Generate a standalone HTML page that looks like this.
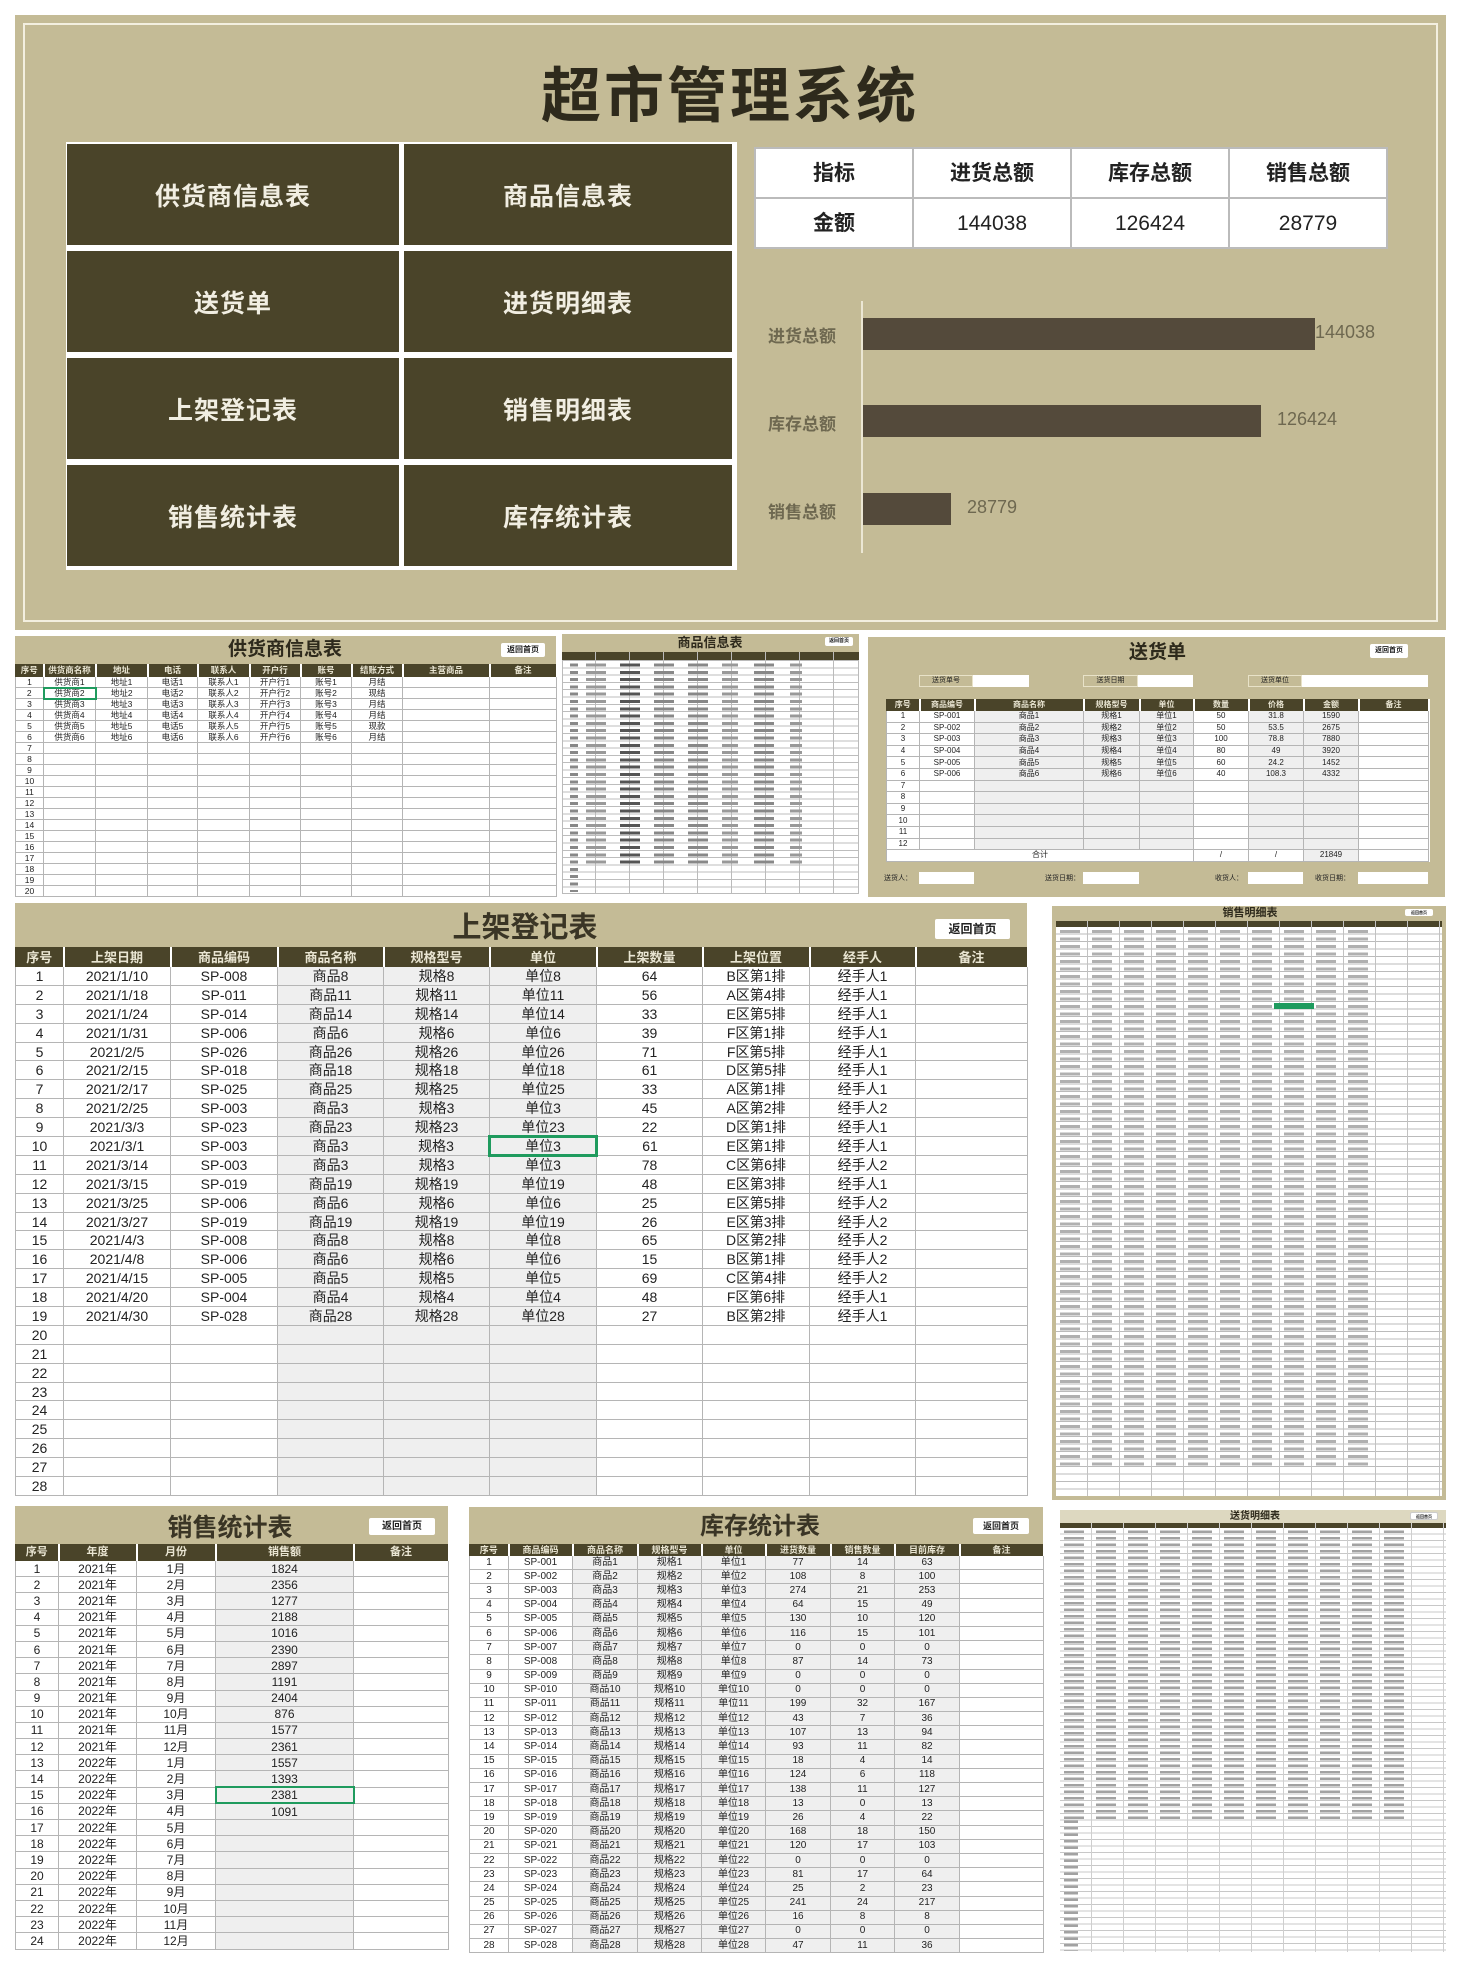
<!DOCTYPE html>
<html><head><meta charset="utf-8">
<style>
*{box-sizing:border-box;margin:0;padding:0}
body{width:1458px;height:1964px;background:#fff;position:relative;overflow:hidden;font-family:"Liberation Sans","Noto Sans CJK SC",sans-serif;color:#222}
.a{position:absolute}
.k{background:#c4bb96}
table{border-collapse:collapse;table-layout:fixed;position:absolute;background:#fff}
td,th{border:1px solid #b5b5b5;text-align:center;white-space:nowrap;overflow:hidden;padding:0;font-weight:normal;line-height:1}
th{background:#4a4429;color:#e9e5d2;border-color:#4a4429;border-right:2px solid #fff;font-weight:bold}
.g{background:#efefef}
.btn{background:#fff;border-radius:2px;text-align:center;color:#222;font-weight:bold}
.nav{position:absolute;background:#4a4429;color:#f1eee2;font-weight:bold;font-size:25px;display:flex;align-items:center;justify-content:center;letter-spacing:1px}
.t{position:absolute;text-align:center;font-weight:bold;color:#2e2a1c}
</style></head><body>

<!-- Dashboard -->
<div class="a k" style="left:15px;top:15px;width:1431px;height:615px"></div>
<div class="a" style="left:23px;top:23px;width:1415px;height:599px;border:2px solid #f3efe0"></div>
<div class="t" style="left:430px;top:62px;width:600px;font-size:60px;line-height:70px;letter-spacing:3px">超市管理系统</div>
<div class="a" style="left:66px;top:142px;width:671px;height:428px;background:#fff"></div>
<div class="nav" style="left:67px;top:144px;width:332px;height:101px">供货商信息表</div>
<div class="nav" style="left:404px;top:144px;width:328px;height:101px">商品信息表</div>
<div class="nav" style="left:67px;top:251px;width:332px;height:101px">送货单</div>
<div class="nav" style="left:404px;top:251px;width:328px;height:101px">进货明细表</div>
<div class="nav" style="left:67px;top:358px;width:332px;height:101px">上架登记表</div>
<div class="nav" style="left:404px;top:358px;width:328px;height:101px">销售明细表</div>
<div class="nav" style="left:67px;top:465px;width:332px;height:101px">销售统计表</div>
<div class="nav" style="left:404px;top:465px;width:328px;height:101px">库存统计表</div>

<table style="left:754px;top:147px;width:634px;height:102px;border:2px solid #bbb;font-size:21px;font-weight:bold">
<tr style="height:50px"><td style="border:2px solid #bbb;font-weight:bold">指标</td><td style="border:2px solid #bbb;font-weight:bold">进货总额</td><td style="border:2px solid #bbb;font-weight:bold">库存总额</td><td style="border:2px solid #bbb;font-weight:bold">销售总额</td></tr>
<tr style="height:50px"><td style="border:2px solid #bbb;font-weight:bold">金额</td><td style="border:2px solid #bbb">144038</td><td style="border:2px solid #bbb">126424</td><td style="border:2px solid #bbb">28779</td></tr>
</table>

<div class="a" style="left:861px;top:301px;width:2px;height:252px;background:#ece7d4"></div>
<div class="a" style="left:863px;top:318px;width:452px;height:32px;background:#544a3b"></div>
<div class="a" style="left:863px;top:405px;width:398px;height:32px;background:#544a3b"></div>
<div class="a" style="left:863px;top:493px;width:88px;height:32px;background:#544a3b"></div>
<div class="a" style="left:768px;top:322px;font-size:17px;color:#6e6850;font-weight:bold">进货总额</div>
<div class="a" style="left:768px;top:410px;font-size:17px;color:#6e6850;font-weight:bold">库存总额</div>
<div class="a" style="left:768px;top:498px;font-size:17px;color:#6e6850;font-weight:bold">销售总额</div>
<div class="a" style="left:1315px;top:322px;font-size:18px;color:#6e6850">144038</div>
<div class="a" style="left:1277px;top:409px;font-size:18px;color:#6e6850">126424</div>
<div class="a" style="left:967px;top:497px;font-size:18px;color:#6e6850">28779</div>

<!-- 供货商信息表 -->
<div class="a k" style="left:15px;top:636px;width:541px;height:28px"></div>
<div class="t" style="left:180px;top:638px;width:210px;font-size:19px;line-height:24px">供货商信息表</div>
<div class="a btn" style="left:501px;top:643px;width:44px;height:14px;font-size:8px;line-height:14px">返回首页</div>
<table style="left:15px;top:664px;width:541px;font-size:8.5px">
<colgroup><col style="width:28px"><col style="width:52px"><col style="width:52px"><col style="width:50px"><col style="width:52px"><col style="width:51px"><col style="width:51px"><col style="width:51px"><col style="width:87px"><col style="width:67px"></colgroup>
<tr style="height:12px"><th>序号</th><th>供货商名称</th><th>地址</th><th>电话</th><th>联系人</th><th>开户行</th><th>账号</th><th>结账方式</th><th>主营商品</th><th>备注</th></tr>
<tr style="height:11px"><td>1</td><td>供货商1</td><td>地址1</td><td>电话1</td><td>联系人1</td><td>开户行1</td><td>账号1</td><td>月结</td><td></td><td></td></tr>
<tr style="height:11px"><td>2</td><td style="border:2px solid #1f9b5e">供货商2</td><td>地址2</td><td>电话2</td><td>联系人2</td><td>开户行2</td><td>账号2</td><td>现结</td><td></td><td></td></tr>
<tr style="height:11px"><td>3</td><td>供货商3</td><td>地址3</td><td>电话3</td><td>联系人3</td><td>开户行3</td><td>账号3</td><td>月结</td><td></td><td></td></tr>
<tr style="height:11px"><td>4</td><td>供货商4</td><td>地址4</td><td>电话4</td><td>联系人4</td><td>开户行4</td><td>账号4</td><td>月结</td><td></td><td></td></tr>
<tr style="height:11px"><td>5</td><td>供货商5</td><td>地址5</td><td>电话5</td><td>联系人5</td><td>开户行5</td><td>账号5</td><td>现款</td><td></td><td></td></tr>
<tr style="height:11px"><td>6</td><td>供货商6</td><td>地址6</td><td>电话6</td><td>联系人6</td><td>开户行6</td><td>账号6</td><td>月结</td><td></td><td></td></tr>
<tr style="height:11px"><td>7</td><td></td><td></td><td></td><td></td><td></td><td></td><td></td><td></td><td></td></tr>
<tr style="height:11px"><td>8</td><td></td><td></td><td></td><td></td><td></td><td></td><td></td><td></td><td></td></tr>
<tr style="height:11px"><td>9</td><td></td><td></td><td></td><td></td><td></td><td></td><td></td><td></td><td></td></tr>
<tr style="height:11px"><td>10</td><td></td><td></td><td></td><td></td><td></td><td></td><td></td><td></td><td></td></tr>
<tr style="height:11px"><td>11</td><td></td><td></td><td></td><td></td><td></td><td></td><td></td><td></td><td></td></tr>
<tr style="height:11px"><td>12</td><td></td><td></td><td></td><td></td><td></td><td></td><td></td><td></td><td></td></tr>
<tr style="height:11px"><td>13</td><td></td><td></td><td></td><td></td><td></td><td></td><td></td><td></td><td></td></tr>
<tr style="height:11px"><td>14</td><td></td><td></td><td></td><td></td><td></td><td></td><td></td><td></td><td></td></tr>
<tr style="height:11px"><td>15</td><td></td><td></td><td></td><td></td><td></td><td></td><td></td><td></td><td></td></tr>
<tr style="height:11px"><td>16</td><td></td><td></td><td></td><td></td><td></td><td></td><td></td><td></td><td></td></tr>
<tr style="height:11px"><td>17</td><td></td><td></td><td></td><td></td><td></td><td></td><td></td><td></td><td></td></tr>
<tr style="height:11px"><td>18</td><td></td><td></td><td></td><td></td><td></td><td></td><td></td><td></td><td></td></tr>
<tr style="height:11px"><td>19</td><td></td><td></td><td></td><td></td><td></td><td></td><td></td><td></td><td></td></tr>
<tr style="height:11px"><td>20</td><td></td><td></td><td></td><td></td><td></td><td></td><td></td><td></td><td></td></tr>
</table>

<!-- 商品信息表 thumbnail -->
<div class="a k" style="left:562px;top:634px;width:297px;height:18px"></div>
<div class="t" style="left:650px;top:634px;width:120px;font-size:13px;line-height:18px">商品信息表</div>
<div class="a btn" style="left:825px;top:637px;width:28px;height:9px;font-size:5px;line-height:9px">返回首页</div>
<div class="a" style="left:562px;top:652px;width:297px;height:8px;background:#4a4429"></div>
<div class="a" style="left:562px;top:660px;width:297px;height:234px;background:repeating-linear-gradient(to bottom,transparent 0 6.3px,#bdbdbd 6.3px 7.3px),#fff;border:1px solid #bbb"></div>
<div class="a" style="left:562px;top:652px;width:297px;height:242px;background:repeating-linear-gradient(to right,transparent 0 33px,#bbb 33px 34px)"></div>
<div class="a" style="left:570px;top:662px;width:8px;height:230px;background:repeating-linear-gradient(to bottom,transparent 0 1.5px,#888 1.5px 4.5px,transparent 4.5px 7.3px)"></div>
<div class="a" style="left:586px;top:662px;width:20px;height:204px;background:repeating-linear-gradient(to bottom,transparent 0 1.5px,#999 1.5px 4.5px,transparent 4.5px 7.3px)"></div>
<div class="a" style="left:620px;top:662px;width:20px;height:204px;background:repeating-linear-gradient(to bottom,transparent 0 1.5px,#555 1.5px 4.5px,transparent 4.5px 7.3px)"></div>
<div class="a" style="left:654px;top:662px;width:20px;height:204px;background:repeating-linear-gradient(to bottom,transparent 0 1.5px,#888 1.5px 4.5px,transparent 4.5px 7.3px)"></div>
<div class="a" style="left:688px;top:662px;width:20px;height:204px;background:repeating-linear-gradient(to bottom,transparent 0 1.5px,#888 1.5px 4.5px,transparent 4.5px 7.3px)"></div>
<div class="a" style="left:722px;top:662px;width:16px;height:204px;background:repeating-linear-gradient(to bottom,transparent 0 1.5px,#999 1.5px 4.5px,transparent 4.5px 7.3px)"></div>
<div class="a" style="left:754px;top:662px;width:20px;height:204px;background:repeating-linear-gradient(to bottom,transparent 0 1.5px,#888 1.5px 4.5px,transparent 4.5px 7.3px)"></div>
<div class="a" style="left:790px;top:662px;width:12px;height:204px;background:repeating-linear-gradient(to bottom,transparent 0 1.5px,#999 1.5px 4.5px,transparent 4.5px 7.3px)"></div>

<!-- 送货单 -->
<div class="a k" style="left:868px;top:637px;width:577px;height:260px"></div>
<div class="t" style="left:1100px;top:641px;width:115px;font-size:19px;line-height:24px">送货单</div>
<div class="a btn" style="left:1370px;top:644px;width:38px;height:14px;font-size:7px;line-height:14px">返回首页</div>
<div class="a" style="left:919px;top:675px;width:54px;height:12px;border:1px solid #e8e2c8;font-size:7px;text-align:center;line-height:10px">送货单号</div>
<div class="a" style="left:973px;top:675px;width:56px;height:12px;background:#fff"></div>
<div class="a" style="left:1083px;top:675px;width:55px;height:12px;border:1px solid #e8e2c8;font-size:7px;text-align:center;line-height:10px">送货日期</div>
<div class="a" style="left:1138px;top:675px;width:55px;height:12px;background:#fff"></div>
<div class="a" style="left:1248px;top:675px;width:54px;height:12px;border:1px solid #e8e2c8;font-size:7px;text-align:center;line-height:10px">送货单位</div>
<div class="a" style="left:1302px;top:675px;width:126px;height:12px;background:#fff"></div>
<table style="left:886px;top:699px;width:542px;font-size:8px">
<colgroup><col style="width:33px"><col style="width:55px"><col style="width:109px"><col style="width:56px"><col style="width:54px"><col style="width:55px"><col style="width:55px"><col style="width:55px"><col style="width:70px"></colgroup>
<tr style="height:11px"><th>序号</th><th>商品编号</th><th>商品名称</th><th>规格型号</th><th>单位</th><th>数量</th><th>价格</th><th>金额</th><th>备注</th></tr>
<tr style="height:11.6px"><td>1</td><td>SP-001</td><td class="g">商品1</td><td class="g">规格1</td><td class="g">单位1</td><td>50</td><td class="g">31.8</td><td class="g">1590</td><td></td></tr>
<tr style="height:11.6px"><td>2</td><td>SP-002</td><td class="g">商品2</td><td class="g">规格2</td><td class="g">单位2</td><td>50</td><td class="g">53.5</td><td class="g">2675</td><td></td></tr>
<tr style="height:11.6px"><td>3</td><td>SP-003</td><td class="g">商品3</td><td class="g">规格3</td><td class="g">单位3</td><td>100</td><td class="g">78.8</td><td class="g">7880</td><td></td></tr>
<tr style="height:11.6px"><td>4</td><td>SP-004</td><td class="g">商品4</td><td class="g">规格4</td><td class="g">单位4</td><td>80</td><td class="g">49</td><td class="g">3920</td><td></td></tr>
<tr style="height:11.6px"><td>5</td><td>SP-005</td><td class="g">商品5</td><td class="g">规格5</td><td class="g">单位5</td><td>60</td><td class="g">24.2</td><td class="g">1452</td><td></td></tr>
<tr style="height:11.6px"><td>6</td><td>SP-006</td><td class="g">商品6</td><td class="g">规格6</td><td class="g">单位6</td><td>40</td><td class="g">108.3</td><td class="g">4332</td><td></td></tr>
<tr style="height:11.6px"><td>7</td><td></td><td class="g"></td><td class="g"></td><td class="g"></td><td></td><td class="g"></td><td class="g"></td><td></td></tr>
<tr style="height:11.6px"><td>8</td><td></td><td class="g"></td><td class="g"></td><td class="g"></td><td></td><td class="g"></td><td class="g"></td><td></td></tr>
<tr style="height:11.6px"><td>9</td><td></td><td class="g"></td><td class="g"></td><td class="g"></td><td></td><td class="g"></td><td class="g"></td><td></td></tr>
<tr style="height:11.6px"><td>10</td><td></td><td class="g"></td><td class="g"></td><td class="g"></td><td></td><td class="g"></td><td class="g"></td><td></td></tr>
<tr style="height:11.6px"><td>11</td><td></td><td class="g"></td><td class="g"></td><td class="g"></td><td></td><td class="g"></td><td class="g"></td><td></td></tr>
<tr style="height:11.6px"><td>12</td><td></td><td class="g"></td><td class="g"></td><td class="g"></td><td></td><td class="g"></td><td class="g"></td><td></td></tr>
<tr style="height:11.6px"><td colspan="5">合计</td><td>/</td><td>/</td><td class="g">21849</td><td></td></tr>
</table>
<div class="a" style="left:884px;top:873px;font-size:7px">送货人：</div>
<div class="a" style="left:919px;top:872px;width:55px;height:12px;background:#fff"></div>
<div class="a" style="left:1045px;top:873px;font-size:7px">送货日期：</div>
<div class="a" style="left:1083px;top:872px;width:56px;height:12px;background:#fff"></div>
<div class="a" style="left:1215px;top:873px;font-size:7px">收货人：</div>
<div class="a" style="left:1248px;top:872px;width:55px;height:12px;background:#fff"></div>
<div class="a" style="left:1315px;top:873px;font-size:7px">收货日期：</div>
<div class="a" style="left:1358px;top:872px;width:70px;height:12px;background:#fff"></div>

<!-- 上架登记表 -->
<div class="a k" style="left:15px;top:903px;width:1012px;height:44px"></div>
<div class="t" style="left:400px;top:910px;width:250px;font-size:29px;line-height:36px;color:#3a3525">上架登记表</div>
<div class="a btn" style="left:935px;top:919px;width:75px;height:20px;font-size:12px;line-height:20px">返回首页</div>
<table style="left:15px;top:947px;width:1012px;font-size:14px">
<colgroup><col style="width:48px"><col style="width:107px"><col style="width:107px"><col style="width:106px"><col style="width:106px"><col style="width:107px"><col style="width:106px"><col style="width:107px"><col style="width:106px"><col style="width:112px"></colgroup>
<tr style="height:19px"><th style="font-size:13px">序号</th><th style="font-size:13px">上架日期</th><th style="font-size:13px">商品编码</th><th style="font-size:13px">商品名称</th><th style="font-size:13px">规格型号</th><th style="font-size:13px">单位</th><th style="font-size:13px">上架数量</th><th style="font-size:13px">上架位置</th><th style="font-size:13px">经手人</th><th style="font-size:13px">备注</th></tr>
<tr style="height:18.9px"><td>1</td><td>2021/1/10</td><td>SP-008</td><td class="g">商品8</td><td class="g">规格8</td><td class="g">单位8</td><td>64</td><td>B区第1排</td><td>经手人1</td><td></td></tr>
<tr style="height:18.9px"><td>2</td><td>2021/1/18</td><td>SP-011</td><td class="g">商品11</td><td class="g">规格11</td><td class="g">单位11</td><td>56</td><td>A区第4排</td><td>经手人1</td><td></td></tr>
<tr style="height:18.9px"><td>3</td><td>2021/1/24</td><td>SP-014</td><td class="g">商品14</td><td class="g">规格14</td><td class="g">单位14</td><td>33</td><td>E区第5排</td><td>经手人1</td><td></td></tr>
<tr style="height:18.9px"><td>4</td><td>2021/1/31</td><td>SP-006</td><td class="g">商品6</td><td class="g">规格6</td><td class="g">单位6</td><td>39</td><td>F区第1排</td><td>经手人1</td><td></td></tr>
<tr style="height:18.9px"><td>5</td><td>2021/2/5</td><td>SP-026</td><td class="g">商品26</td><td class="g">规格26</td><td class="g">单位26</td><td>71</td><td>F区第5排</td><td>经手人1</td><td></td></tr>
<tr style="height:18.9px"><td>6</td><td>2021/2/15</td><td>SP-018</td><td class="g">商品18</td><td class="g">规格18</td><td class="g">单位18</td><td>61</td><td>D区第5排</td><td>经手人1</td><td></td></tr>
<tr style="height:18.9px"><td>7</td><td>2021/2/17</td><td>SP-025</td><td class="g">商品25</td><td class="g">规格25</td><td class="g">单位25</td><td>33</td><td>A区第1排</td><td>经手人1</td><td></td></tr>
<tr style="height:18.9px"><td>8</td><td>2021/2/25</td><td>SP-003</td><td class="g">商品3</td><td class="g">规格3</td><td class="g">单位3</td><td>45</td><td>A区第2排</td><td>经手人2</td><td></td></tr>
<tr style="height:18.9px"><td>9</td><td>2021/3/3</td><td>SP-023</td><td class="g">商品23</td><td class="g">规格23</td><td class="g">单位23</td><td>22</td><td>D区第1排</td><td>经手人1</td><td></td></tr>
<tr style="height:18.9px"><td>10</td><td>2021/3/1</td><td>SP-003</td><td class="g">商品3</td><td class="g">规格3</td><td class="g" style="border:3px solid #1f9b5e">单位3</td><td>61</td><td>E区第1排</td><td>经手人1</td><td></td></tr>
<tr style="height:18.9px"><td>11</td><td>2021/3/14</td><td>SP-003</td><td class="g">商品3</td><td class="g">规格3</td><td class="g">单位3</td><td>78</td><td>C区第6排</td><td>经手人2</td><td></td></tr>
<tr style="height:18.9px"><td>12</td><td>2021/3/15</td><td>SP-019</td><td class="g">商品19</td><td class="g">规格19</td><td class="g">单位19</td><td>48</td><td>E区第3排</td><td>经手人1</td><td></td></tr>
<tr style="height:18.9px"><td>13</td><td>2021/3/25</td><td>SP-006</td><td class="g">商品6</td><td class="g">规格6</td><td class="g">单位6</td><td>25</td><td>E区第5排</td><td>经手人2</td><td></td></tr>
<tr style="height:18.9px"><td>14</td><td>2021/3/27</td><td>SP-019</td><td class="g">商品19</td><td class="g">规格19</td><td class="g">单位19</td><td>26</td><td>E区第3排</td><td>经手人2</td><td></td></tr>
<tr style="height:18.9px"><td>15</td><td>2021/4/3</td><td>SP-008</td><td class="g">商品8</td><td class="g">规格8</td><td class="g">单位8</td><td>65</td><td>D区第2排</td><td>经手人2</td><td></td></tr>
<tr style="height:18.9px"><td>16</td><td>2021/4/8</td><td>SP-006</td><td class="g">商品6</td><td class="g">规格6</td><td class="g">单位6</td><td>15</td><td>B区第1排</td><td>经手人2</td><td></td></tr>
<tr style="height:18.9px"><td>17</td><td>2021/4/15</td><td>SP-005</td><td class="g">商品5</td><td class="g">规格5</td><td class="g">单位5</td><td>69</td><td>C区第4排</td><td>经手人2</td><td></td></tr>
<tr style="height:18.9px"><td>18</td><td>2021/4/20</td><td>SP-004</td><td class="g">商品4</td><td class="g">规格4</td><td class="g">单位4</td><td>48</td><td>F区第6排</td><td>经手人1</td><td></td></tr>
<tr style="height:18.9px"><td>19</td><td>2021/4/30</td><td>SP-028</td><td class="g">商品28</td><td class="g">规格28</td><td class="g">单位28</td><td>27</td><td>B区第2排</td><td>经手人1</td><td></td></tr>
<tr style="height:18.9px"><td>20</td><td></td><td></td><td class="g"></td><td class="g"></td><td class="g"></td><td></td><td></td><td></td><td></td></tr>
<tr style="height:18.9px"><td>21</td><td></td><td></td><td class="g"></td><td class="g"></td><td class="g"></td><td></td><td></td><td></td><td></td></tr>
<tr style="height:18.9px"><td>22</td><td></td><td></td><td class="g"></td><td class="g"></td><td class="g"></td><td></td><td></td><td></td><td></td></tr>
<tr style="height:18.9px"><td>23</td><td></td><td></td><td class="g"></td><td class="g"></td><td class="g"></td><td></td><td></td><td></td><td></td></tr>
<tr style="height:18.9px"><td>24</td><td></td><td></td><td class="g"></td><td class="g"></td><td class="g"></td><td></td><td></td><td></td><td></td></tr>
<tr style="height:18.9px"><td>25</td><td></td><td></td><td class="g"></td><td class="g"></td><td class="g"></td><td></td><td></td><td></td><td></td></tr>
<tr style="height:18.9px"><td>26</td><td></td><td></td><td class="g"></td><td class="g"></td><td class="g"></td><td></td><td></td><td></td><td></td></tr>
<tr style="height:18.9px"><td>27</td><td></td><td></td><td class="g"></td><td class="g"></td><td class="g"></td><td></td><td></td><td></td><td></td></tr>
<tr style="height:18.9px"><td>28</td><td></td><td></td><td class="g"></td><td class="g"></td><td class="g"></td><td></td><td></td><td></td><td></td></tr>
</table>

<!-- 销售明细表 thumbnail -->
<div class="a k" style="left:1052px;top:906px;width:394px;height:594px"></div>
<div class="t" style="left:1180px;top:907px;width:140px;font-size:11px;line-height:13px">销售明细表</div>
<div class="a btn" style="left:1405px;top:909px;width:28px;height:7px;font-size:4px;line-height:7px">返回首页</div>
<div class="a" style="left:1056px;top:921px;width:386px;height:6px;background:#4a4429"></div>
<div class="a" style="left:1056px;top:927px;width:386px;height:569px;background:repeating-linear-gradient(to bottom,transparent 0 6.5px,#bbb 6.5px 7.5px),#fff"></div>
<div class="a" style="left:1056px;top:921px;width:386px;height:575px;background:repeating-linear-gradient(to right,transparent 0 31px,#c2c2c2 31px 32px)"></div>
<div class="a" style="left:1060px;top:928px;width:320px;height:540px;background:repeating-linear-gradient(to bottom,transparent 0 2px,rgba(80,80,80,.45) 2px 5px,transparent 5px 7.5px);-webkit-mask:repeating-linear-gradient(to right,#000 0 20px,transparent 20px 32px)"></div>
<div class="a" style="left:1274px;top:1003px;width:40px;height:6px;background:#1f9b5e"></div>

<!-- 销售统计表 -->
<div class="a k" style="left:15px;top:1506px;width:433px;height:38px"></div>
<div class="t" style="left:150px;top:1512px;width:160px;font-size:25px;line-height:32px;color:#3a3525">销售统计表</div>
<div class="a btn" style="left:369px;top:1518px;width:66px;height:17px;font-size:10px;line-height:17px">返回首页</div>
<table style="left:15px;top:1544px;width:433px;font-size:12px">
<colgroup><col style="width:43px"><col style="width:78px"><col style="width:79px"><col style="width:138px"><col style="width:95px"></colgroup>
<tr style="height:16px"><th style="font-size:11px">序号</th><th style="font-size:11px">年度</th><th style="font-size:11px">月份</th><th style="font-size:11px">销售额</th><th style="font-size:11px">备注</th></tr>
<tr style="height:16.2px"><td>1</td><td>2021年</td><td>1月</td><td class="g">1824</td><td></td></tr>
<tr style="height:16.2px"><td>2</td><td>2021年</td><td>2月</td><td class="g">2356</td><td></td></tr>
<tr style="height:16.2px"><td>3</td><td>2021年</td><td>3月</td><td class="g">1277</td><td></td></tr>
<tr style="height:16.2px"><td>4</td><td>2021年</td><td>4月</td><td class="g">2188</td><td></td></tr>
<tr style="height:16.2px"><td>5</td><td>2021年</td><td>5月</td><td class="g">1016</td><td></td></tr>
<tr style="height:16.2px"><td>6</td><td>2021年</td><td>6月</td><td class="g">2390</td><td></td></tr>
<tr style="height:16.2px"><td>7</td><td>2021年</td><td>7月</td><td class="g">2897</td><td></td></tr>
<tr style="height:16.2px"><td>8</td><td>2021年</td><td>8月</td><td class="g">1191</td><td></td></tr>
<tr style="height:16.2px"><td>9</td><td>2021年</td><td>9月</td><td class="g">2404</td><td></td></tr>
<tr style="height:16.2px"><td>10</td><td>2021年</td><td>10月</td><td class="g">876</td><td></td></tr>
<tr style="height:16.2px"><td>11</td><td>2021年</td><td>11月</td><td class="g">1577</td><td></td></tr>
<tr style="height:16.2px"><td>12</td><td>2021年</td><td>12月</td><td class="g">2361</td><td></td></tr>
<tr style="height:16.2px"><td>13</td><td>2022年</td><td>1月</td><td class="g">1557</td><td></td></tr>
<tr style="height:16.2px"><td>14</td><td>2022年</td><td>2月</td><td class="g">1393</td><td></td></tr>
<tr style="height:16.2px"><td>15</td><td>2022年</td><td>3月</td><td class="g" style="border:2px solid #1f9b5e">2381</td><td></td></tr>
<tr style="height:16.2px"><td>16</td><td>2022年</td><td>4月</td><td class="g">1091</td><td></td></tr>
<tr style="height:16.2px"><td>17</td><td>2022年</td><td>5月</td><td class="g"></td><td></td></tr>
<tr style="height:16.2px"><td>18</td><td>2022年</td><td>6月</td><td class="g"></td><td></td></tr>
<tr style="height:16.2px"><td>19</td><td>2022年</td><td>7月</td><td class="g"></td><td></td></tr>
<tr style="height:16.2px"><td>20</td><td>2022年</td><td>8月</td><td class="g"></td><td></td></tr>
<tr style="height:16.2px"><td>21</td><td>2022年</td><td>9月</td><td class="g"></td><td></td></tr>
<tr style="height:16.2px"><td>22</td><td>2022年</td><td>10月</td><td class="g"></td><td></td></tr>
<tr style="height:16.2px"><td>23</td><td>2022年</td><td>11月</td><td class="g"></td><td></td></tr>
<tr style="height:16.2px"><td>24</td><td>2022年</td><td>12月</td><td class="g"></td><td></td></tr>
</table>

<!-- 库存统计表 -->
<div class="a k" style="left:469px;top:1507px;width:574px;height:37px"></div>
<div class="t" style="left:680px;top:1512px;width:160px;font-size:24px;line-height:30px;color:#3a3525">库存统计表</div>
<div class="a btn" style="left:973px;top:1518px;width:56px;height:16px;font-size:9px;line-height:16px">返回首页</div>
<table style="left:469px;top:1544px;width:574px;font-size:10px">
<colgroup><col style="width:39px"><col style="width:64px"><col style="width:65px"><col style="width:64px"><col style="width:64px"><col style="width:65px"><col style="width:64px"><col style="width:65px"><col style="width:84px"></colgroup>
<tr style="height:11px"><th style="font-size:9px">序号</th><th style="font-size:9px">商品编码</th><th style="font-size:9px">商品名称</th><th style="font-size:9px">规格型号</th><th style="font-size:9px">单位</th><th style="font-size:9px">进货数量</th><th style="font-size:9px">销售数量</th><th style="font-size:9px">目前库存</th><th style="font-size:9px">备注</th></tr>
<tr style="height:14.2px"><td>1</td><td>SP-001</td><td class="g">商品1</td><td class="g">规格1</td><td class="g">单位1</td><td class="g">77</td><td class="g">14</td><td class="g">63</td><td></td></tr>
<tr style="height:14.2px"><td>2</td><td>SP-002</td><td class="g">商品2</td><td class="g">规格2</td><td class="g">单位2</td><td class="g">108</td><td class="g">8</td><td class="g">100</td><td></td></tr>
<tr style="height:14.2px"><td>3</td><td>SP-003</td><td class="g">商品3</td><td class="g">规格3</td><td class="g">单位3</td><td class="g">274</td><td class="g">21</td><td class="g">253</td><td></td></tr>
<tr style="height:14.2px"><td>4</td><td>SP-004</td><td class="g">商品4</td><td class="g">规格4</td><td class="g">单位4</td><td class="g">64</td><td class="g">15</td><td class="g">49</td><td></td></tr>
<tr style="height:14.2px"><td>5</td><td>SP-005</td><td class="g">商品5</td><td class="g">规格5</td><td class="g">单位5</td><td class="g">130</td><td class="g">10</td><td class="g">120</td><td></td></tr>
<tr style="height:14.2px"><td>6</td><td>SP-006</td><td class="g">商品6</td><td class="g">规格6</td><td class="g">单位6</td><td class="g">116</td><td class="g">15</td><td class="g">101</td><td></td></tr>
<tr style="height:14.2px"><td>7</td><td>SP-007</td><td class="g">商品7</td><td class="g">规格7</td><td class="g">单位7</td><td class="g">0</td><td class="g">0</td><td class="g">0</td><td></td></tr>
<tr style="height:14.2px"><td>8</td><td>SP-008</td><td class="g">商品8</td><td class="g">规格8</td><td class="g">单位8</td><td class="g">87</td><td class="g">14</td><td class="g">73</td><td></td></tr>
<tr style="height:14.2px"><td>9</td><td>SP-009</td><td class="g">商品9</td><td class="g">规格9</td><td class="g">单位9</td><td class="g">0</td><td class="g">0</td><td class="g">0</td><td></td></tr>
<tr style="height:14.2px"><td>10</td><td>SP-010</td><td class="g">商品10</td><td class="g">规格10</td><td class="g">单位10</td><td class="g">0</td><td class="g">0</td><td class="g">0</td><td></td></tr>
<tr style="height:14.2px"><td>11</td><td>SP-011</td><td class="g">商品11</td><td class="g">规格11</td><td class="g">单位11</td><td class="g">199</td><td class="g">32</td><td class="g">167</td><td></td></tr>
<tr style="height:14.2px"><td>12</td><td>SP-012</td><td class="g">商品12</td><td class="g">规格12</td><td class="g">单位12</td><td class="g">43</td><td class="g">7</td><td class="g">36</td><td></td></tr>
<tr style="height:14.2px"><td>13</td><td>SP-013</td><td class="g">商品13</td><td class="g">规格13</td><td class="g">单位13</td><td class="g">107</td><td class="g">13</td><td class="g">94</td><td></td></tr>
<tr style="height:14.2px"><td>14</td><td>SP-014</td><td class="g">商品14</td><td class="g">规格14</td><td class="g">单位14</td><td class="g">93</td><td class="g">11</td><td class="g">82</td><td></td></tr>
<tr style="height:14.2px"><td>15</td><td>SP-015</td><td class="g">商品15</td><td class="g">规格15</td><td class="g">单位15</td><td class="g">18</td><td class="g">4</td><td class="g">14</td><td></td></tr>
<tr style="height:14.2px"><td>16</td><td>SP-016</td><td class="g">商品16</td><td class="g">规格16</td><td class="g">单位16</td><td class="g">124</td><td class="g">6</td><td class="g">118</td><td></td></tr>
<tr style="height:14.2px"><td>17</td><td>SP-017</td><td class="g">商品17</td><td class="g">规格17</td><td class="g">单位17</td><td class="g">138</td><td class="g">11</td><td class="g">127</td><td></td></tr>
<tr style="height:14.2px"><td>18</td><td>SP-018</td><td class="g">商品18</td><td class="g">规格18</td><td class="g">单位18</td><td class="g">13</td><td class="g">0</td><td class="g">13</td><td></td></tr>
<tr style="height:14.2px"><td>19</td><td>SP-019</td><td class="g">商品19</td><td class="g">规格19</td><td class="g">单位19</td><td class="g">26</td><td class="g">4</td><td class="g">22</td><td></td></tr>
<tr style="height:14.2px"><td>20</td><td>SP-020</td><td class="g">商品20</td><td class="g">规格20</td><td class="g">单位20</td><td class="g">168</td><td class="g">18</td><td class="g">150</td><td></td></tr>
<tr style="height:14.2px"><td>21</td><td>SP-021</td><td class="g">商品21</td><td class="g">规格21</td><td class="g">单位21</td><td class="g">120</td><td class="g">17</td><td class="g">103</td><td></td></tr>
<tr style="height:14.2px"><td>22</td><td>SP-022</td><td class="g">商品22</td><td class="g">规格22</td><td class="g">单位22</td><td class="g">0</td><td class="g">0</td><td class="g">0</td><td></td></tr>
<tr style="height:14.2px"><td>23</td><td>SP-023</td><td class="g">商品23</td><td class="g">规格23</td><td class="g">单位23</td><td class="g">81</td><td class="g">17</td><td class="g">64</td><td></td></tr>
<tr style="height:14.2px"><td>24</td><td>SP-024</td><td class="g">商品24</td><td class="g">规格24</td><td class="g">单位24</td><td class="g">25</td><td class="g">2</td><td class="g">23</td><td></td></tr>
<tr style="height:14.2px"><td>25</td><td>SP-025</td><td class="g">商品25</td><td class="g">规格25</td><td class="g">单位25</td><td class="g">241</td><td class="g">24</td><td class="g">217</td><td></td></tr>
<tr style="height:14.2px"><td>26</td><td>SP-026</td><td class="g">商品26</td><td class="g">规格26</td><td class="g">单位26</td><td class="g">16</td><td class="g">8</td><td class="g">8</td><td></td></tr>
<tr style="height:14.2px"><td>27</td><td>SP-027</td><td class="g">商品27</td><td class="g">规格27</td><td class="g">单位27</td><td class="g">0</td><td class="g">0</td><td class="g">0</td><td></td></tr>
<tr style="height:14.2px"><td>28</td><td>SP-028</td><td class="g">商品28</td><td class="g">规格28</td><td class="g">单位28</td><td class="g">47</td><td class="g">11</td><td class="g">36</td><td></td></tr>
</table>

<!-- 送货明细表 thumbnail -->
<div class="a" style="left:1060px;top:1510px;width:386px;height:13px;background:#ddd8c0"></div>
<div class="t" style="left:1200px;top:1510px;width:110px;font-size:10px;line-height:13px">送货明细表</div>
<div class="a btn" style="left:1410px;top:1512px;width:28px;height:8px;font-size:4px;line-height:8px;border:1px solid #ccc">返回首页</div>
<div class="a" style="left:1060px;top:1523px;width:386px;height:5px;background:#4a4429"></div>
<div class="a" style="left:1060px;top:1528px;width:386px;height:424px;background:repeating-linear-gradient(to bottom,transparent 0 5.5px,#c8c8c8 5.5px 6.5px),#fff"></div>
<div class="a" style="left:1060px;top:1523px;width:386px;height:429px;background:repeating-linear-gradient(to right,transparent 0 31px,#cfcfcf 31px 32px)"></div>
<div class="a" style="left:1064px;top:1529px;width:340px;height:290px;background:repeating-linear-gradient(to bottom,transparent 0 1.5px,rgba(70,70,70,.5) 1.5px 4px,transparent 4px 6.5px);-webkit-mask:repeating-linear-gradient(to right,#000 0 20px,transparent 20px 32px)"></div>
<div class="a" style="left:1064px;top:1819px;width:14px;height:132px;background:repeating-linear-gradient(to bottom,transparent 0 1.5px,rgba(70,70,70,.5) 1.5px 4px,transparent 4px 6.5px)"></div>

</body></html>
